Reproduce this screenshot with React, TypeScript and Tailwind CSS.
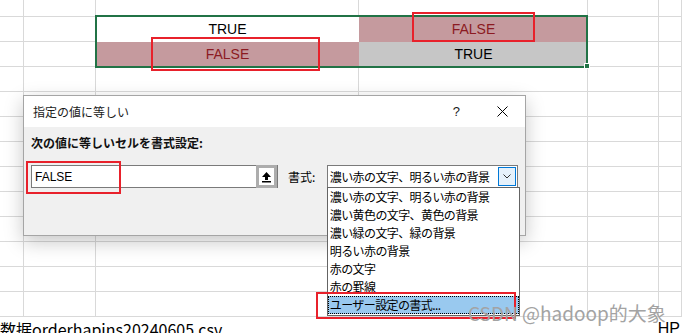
import React from "react";

const jp = "font-['Noto_Sans_CJK_JP','Noto_Sans',sans-serif]";

type Cell = { text: string; bg: string; color: string };

const data: Record<string, Cell> = {
  "1-2": { text: "TRUE", bg: "bg-white", color: "text-black" },
  "1-3": { text: "FALSE", bg: "bg-[#c59a9e]", color: "text-[#8c1a22]" },
  "2-2": { text: "FALSE", bg: "bg-[#c59a9e]", color: "text-[#8c1a22]" },
  "2-3": { text: "TRUE", bg: "bg-[#c6c6c6]", color: "text-black" },
};

const items = [
  "濃い赤の文字、明るい赤の背景",
  "濃い黄色の文字、黄色の背景",
  "濃い緑の文字、緑の背景",
  "明るい赤の背景",
  "赤の文字",
  "赤の罫線",
  "ユーザー設定の書式...",
];

function Sheet() {
  const rows = Array.from({ length: 13 }, (_, r) => r);
  const cols = Array.from({ length: 6 }, (_, c) => c);
  return (
    <div className="grid grid-cols-[24px_72px_263px_229px_71px_1fr] grid-rows-[17px_repeat(12,25px)]">
      {rows.map((r) =>
        cols.map((c) => {
          const cell = data[`${r}-${c}`];
          if (cell) {
            return (
              <div
                key={`${r}-${c}`}
                className={`flex items-center justify-center text-[14px] ${cell.bg} ${cell.color}`}
              >
                {cell.text}
              </div>
            );
          }
          return (
            <div
              key={`${r}-${c}`}
              className="border-r border-b border-[#d9d9d9]"
            />
          );
        })
      )}
    </div>
  );
}

function UpButton() {
  return (
    <div className="w-[21px] h-[23px] border-[3px] border-[#adadad] bg-white flex items-center justify-center">
      <svg width="11" height="12" viewBox="0 0 11 12">
        <path d="M5.5 1 L10 6 L7 6 L7 9 L4 9 L4 6 L1 6 Z" fill="#000" />
        <rect x="1" y="10" width="9" height="1.5" fill="#000" />
      </svg>
    </div>
  );
}

function Dialog() {
  return (
    <div className={`absolute left-[23px] top-[95px] w-[503px] h-[141px] border border-[#a5a5a5] bg-[#f0f0f0] shadow-[0_6px_18px_rgba(0,0,0,0.22)] ${jp}`}>
      <div className="h-[31px] bg-white flex items-center justify-between pl-[9px] pr-[17px] text-[12px] text-[#1a1a1a]">
        <span>指定の値に等しい</span>
        <div className="flex items-center gap-[37px]">
          <span className="text-[13px] font-['Liberation_Sans',sans-serif]">?</span>
          <svg width="11" height="11" viewBox="0 0 11 11">
            <path d="M0.5 0.5 L10.5 10.5 M10.5 0.5 L0.5 10.5" stroke="#000" strokeWidth="1" />
          </svg>
        </div>
      </div>
      <div className="px-[7px] pt-[8px]">
        <div className="text-[12px] font-bold leading-[16px] text-[#111]">
          次の値に等しいセルを書式設定:
        </div>
        <div className="flex items-center mt-[14px]">
          <div className="w-[248px] h-[23px] border border-[#7a7a7a] bg-white flex items-center justify-between">
            <span className="pl-[3px] text-[12px] font-['Liberation_Sans',sans-serif]">
              FALSE
            </span>
            <UpButton />
          </div>
          <span className="ml-[10px] w-[39px] text-[12px]">書式:</span>
          <div className="relative w-[192px] h-[23px] border border-[#7a7a7a] bg-white flex items-center justify-between">
            <span className="pl-[2px] text-[12px] tracking-[-0.6px]">
              濃い赤の文字、明るい赤の背景
            </span>
            <div className="w-[18px] h-[19px] mr-px border border-[#0078d7] bg-[#e5f1fb] flex items-center justify-center">
              <svg width="8" height="5" viewBox="0 0 8 5">
                <path d="M0.5 0.5 L4 4 L7.5 0.5" stroke="#333" fill="none" strokeWidth="1" />
              </svg>
            </div>
            <div className="absolute top-full -left-px w-[193px] h-[129px] border border-[#646464] bg-white">
              {items.map((t, i) => (
                <div
                  key={t}
                  className={`h-[18px] leading-[18px] pl-[2px] text-[12px] tracking-[-0.6px] ${
                    i === items.length - 1
                      ? "bg-[#99c9ef] outline-1 outline-dotted outline-offset-[-1px] outline-black"
                      : ""
                  }`}
                >
                  {t}
                </div>
              ))}
            </div>
          </div>
        </div>
      </div>
    </div>
  );
}

export default function App() {
  return (
    <div className="relative w-[682px] h-[333px] overflow-hidden bg-white text-black font-['Liberation_Sans',sans-serif]">
      <Sheet />

      {/* file name bar at the bottom */}
      <div className="flex justify-between pt-[2px] text-[16px] leading-[20px]">
        <span className={jp}>数据orderhapins20240605.csv</span>
        <span className="pr-[2px]">HP</span>
      </div>

      {/* selection frame */}
      <div className="absolute left-[95px] top-[15px] w-[493px] h-[53px] border-2 border-[#217346]" />
      <div className="absolute left-[584px] top-[63px] w-[6px] h-[6px] bg-[#217346] border border-white" />

      <Dialog />

      {/* red annotation boxes */}
      <div className="absolute left-[412px] top-[12px] w-[123px] h-[30px] border-2 border-[#e8212b]" />
      <div className="absolute left-[151px] top-[37px] w-[169px] h-[34px] border-2 border-[#e8212b]" />
      <div className="absolute left-[26px] top-[161px] w-[95px] h-[33px] border-2 border-[#e8212b]" />
      <div className="absolute left-[316px] top-[292px] w-[200px] h-[27px] border-2 border-[#e8212b]" />

      <div className={`absolute left-[468px] top-[299px] text-[19px] text-[#a3a3a3] ${jp}`}>
        CSDN @hadoop的大象
      </div>
    </div>
  );
}
